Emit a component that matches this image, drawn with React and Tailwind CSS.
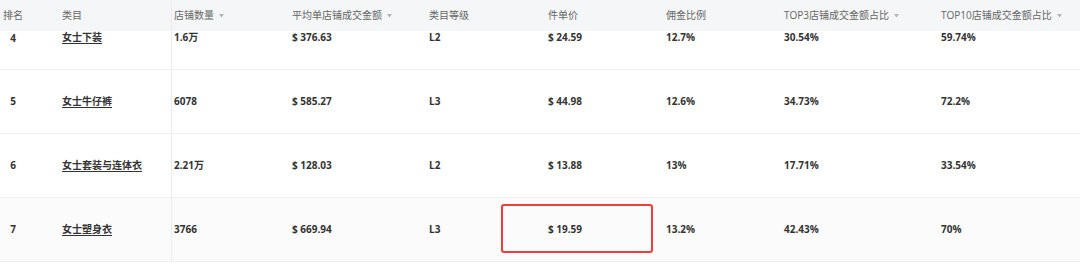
import React from "react";

const font = { fontFamily: '"Open Sans", "Noto Sans CJK SC", sans-serif' };

const cols = [
  { key: "rank", label: "排名", w: "w-[62px]" },
  { key: "cat", label: "类目", w: "w-[110px]" },
  { key: "shops", label: "店铺数量", w: "w-[118px]", sort: true },
  { key: "avg", label: "平均单店铺成交金额", w: "w-[137px]", sort: true },
  { key: "level", label: "类目等级", w: "w-[119px]" },
  { key: "price", label: "件单价", w: "w-[118px]" },
  { key: "comm", label: "佣金比例", w: "w-[118px]" },
  { key: "top3", label: "TOP3店铺成交金额占比", w: "w-[157px]", sort: true },
  { key: "top10", label: "TOP10店铺成交金额占比", w: "w-[141px]", sort: true },
];

const rows = [
  { rank: "4", cat: "女士下装", shops: "1.6万", avg: "$ 376.63", level: "L2", price: "$ 24.59", comm: "12.7%", top3: "30.54%", top10: "59.74%" },
  { rank: "5", cat: "女士牛仔裤", shops: "6078", avg: "$ 585.27", level: "L3", price: "$ 44.98", comm: "12.6%", top3: "34.73%", top10: "72.2%" },
  { rank: "6", cat: "女士套装与连体衣", shops: "2.21万", avg: "$ 128.03", level: "L2", price: "$ 13.88", comm: "13%", top3: "17.71%", top10: "33.54%" },
  { rank: "7", cat: "女士塑身衣", shops: "3766", avg: "$ 669.94", level: "L3", price: "$ 19.59", comm: "13.2%", top3: "42.43%", top10: "70%" },
];

function SortIcon() {
  return (
    <svg width="5" height="4" viewBox="0 0 5 4" className="ml-[5px] mt-[1px]">
      <path d="M0 0 L5 0 L2.5 3.5 Z" fill="#b5b5b5" />
    </svg>
  );
}

function Cell({ col, first, children }) {
  const align = first ? "items-start" : "items-center";
  if (col.key === "rank") {
    return (
      <div className={`${col.w} shrink-0 self-stretch flex ${align}`}>
        <div className="w-[26px] text-center">{children}</div>
      </div>
    );
  }
  if (col.key === "cat") {
    return (
      <div className={`${col.w} shrink-0 self-stretch flex ${align} border-r border-[#ececec]`}>
        {children}
      </div>
    );
  }
  return <div className={`${col.w} shrink-0 self-stretch pl-[2px] flex ${align}`}>{children}</div>;
}

function Row({ r, first, last }) {
  return (
    <div
      className={`relative flex border-b border-[#f0f0f0] text-[10px] font-bold text-[#333] ${
        first ? "h-[39px]" : "h-[64px]"
      } ${last ? "bg-[#fbfbfb]" : "bg-white"}`}
    >
      {cols.map((c) => (
        <Cell key={c.key} col={c} first={first}>
          {c.key === "cat" ? (
            <span className={`underline underline-offset-2 ${first ? "leading-[12px]" : ""}`}>{r[c.key]}</span>
          ) : (
            <span className={first ? "leading-[12px]" : ""}>{r[c.key]}</span>
          )}
        </Cell>
      ))}
      {last && (
        <div className="absolute left-[501px] top-[6px] w-[152px] h-[49px] border-2 border-[#f23c3c] rounded-[3px]" />
      )}
    </div>
  );
}

export default function App() {
  return (
    <div className="w-[1080px] h-[266px] bg-white overflow-hidden" style={font}>
      <div className="flex h-[31px] items-center bg-[#f5f6f8] text-[10px] text-[#666]">
        {cols.map((c) =>
          c.key === "rank" ? (
            <div key={c.key} className={`${c.w} shrink-0 pl-[3px]`}>{c.label}</div>
          ) : c.key === "cat" ? (
            <div key={c.key} className={`${c.w} shrink-0 self-stretch flex items-center border-r border-[#ececec]`}>
              {c.label}
            </div>
          ) : (
            <div key={c.key} className={`${c.w} shrink-0 pl-[2px] flex items-center`}>
              {c.label}
              {c.sort && <SortIcon />}
            </div>
          )
        )}
      </div>
      {rows.map((r, i) => (
        <Row key={r.rank} r={r} first={i === 0} last={i === rows.length - 1} />
      ))}
    </div>
  );
}
